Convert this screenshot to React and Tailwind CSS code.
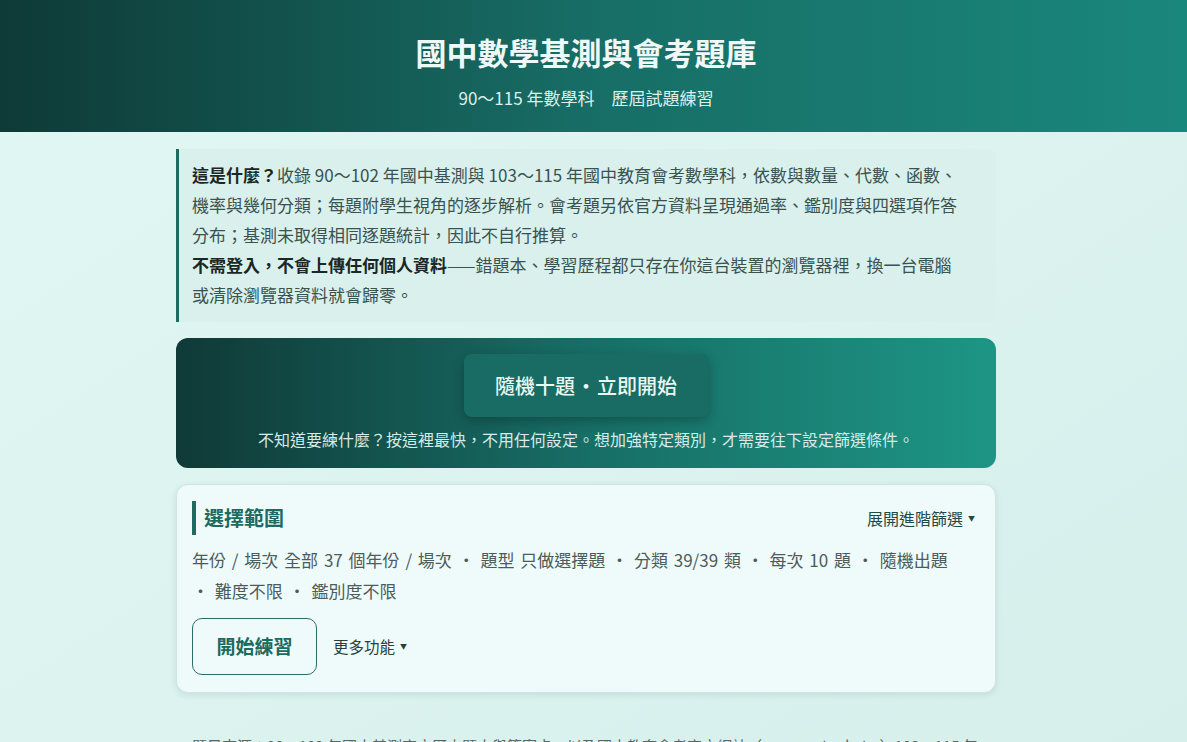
import React from "react";

const font = { fontFamily: '"Noto Sans CJK TC", "Noto Sans", sans-serif' };

export default function App() {
  return (
    <div style={font} className="min-h-[742px] bg-gradient-to-br from-[#e2f7f4] to-[#d6efeb] text-[#2f4744]">
      <header className="h-[132px] pr-[15px] bg-gradient-to-r from-[#0e3a37] via-[#176e66] to-[#1a877c] flex flex-col items-center">
        <h1 className="mt-[31px] text-[31px] leading-[42px] font-bold text-[#eef9f7]">國中數學基測與會考題庫</h1>
        <p className="mt-[12px] text-[17px] leading-[26px] text-[#dcefeb]">90～115 年數學科　歷屆試題練習</p>
      </header>

      <div className="pr-[15px]">
        <main className="w-[820px] mx-auto pt-[17px] flex flex-col">
          <section className="bg-[#d9f0ec] border-l-[3px] border-[#1f6b62] rounded-r-[8px] pl-[13px] pr-[14px] pt-[11px] pb-[12px] text-[17px] leading-[30px] text-[#3a5250]">
            <p>
              <b className="text-[#1a2726]">這是什麼？</b>收錄 90～102 年國中基測與 103～115 年國中教育會考數學科，依數與數量、代數、函數、<br />機率與幾何分類；每題附學生視角的逐步解析。會考題另依官方資料呈現通過率、鑑別度與四選項作答<br />分布；基測未取得相同逐題統計，因此不自行推算。
            </p>
            <p>
              <b className="text-[#1a2726]">不需登入，不會上傳任何個人資料</b>——錯題本、學習歷程都只存在你這台裝置的瀏覽器裡，換一台電腦<br />或清除瀏覽器資料就會歸零。
            </p>
          </section>

          <section className="mt-[16px] h-[130px] rounded-[12px] bg-gradient-to-r from-[#0f3a37] via-[#176e66] to-[#1d9585] flex flex-col items-center pt-[16px]">
            <button className="w-[245px] h-[63px] rounded-[8px] bg-[#196c63] shadow-[0_4px_12px_rgba(0,0,0,0.25)] text-[20px] text-[#eaf7f4] font-medium">
              隨機十題<span className="mx-[1px]">·</span>立即開始
            </button>
            <p className="mt-[11px] text-[16px] leading-[22px] text-[#d6ebe7]">
              不知道要練什麼？按這裡最快，不用任何設定。想加強特定類別，才需要往下設定篩選條件。
            </p>
          </section>

          <section className="mt-[16px] rounded-[12px] bg-[#effbfa] border border-[#cde6e2] shadow-[0_2px_6px_rgba(30,80,75,0.12)] px-[15px] pt-[16px] pb-[17px]">
            <div className="flex items-center justify-between">
              <h2 className="border-l-[4px] border-[#1f6b62] pl-[8px] text-[20px] leading-[34px] font-bold text-[#1c6a60]">選擇範圍</h2>
              <button className="mr-[5px] text-[16px] text-[#1f4a45] flex items-center gap-[5px]">
                展開進階篩選 <span className="text-[7px]">▼</span>
              </button>
            </div>
            <p className="mt-[9px] text-[17px] leading-[31px] text-[#4b5c5a] [word-spacing:2px]">
              年份 / 場次 全部 37 個年份 / 場次 ・ 題型 只做選擇題 ・ 分類 39/39 類 ・ 每次 10 題 ・ 隨機出題<br />・ 難度不限 ・ 鑑別度不限
            </p>
            <div className="mt-[12px] flex items-center gap-[16px]">
              <button className="w-[125px] h-[57px] rounded-[10px] border border-[#2a6f66] text-[19px] font-bold text-[#1c6a60]">開始練習</button>
              <button className="text-[15.5px] text-[#2a3f3c] flex items-center gap-[5px]">
                更多功能 <span className="text-[7px]">▼</span>
              </button>
            </div>
          </section>

          <p className="mt-[40px] px-[16px] text-[15px] leading-[26px] text-[#5a6664]">
            題目來源：90～102 年國中基測官方歷史題本與答案卡，以及國中教育會考官方網站（cap.rcpet.edu.tw）103～115 年會考試題、參考答案與試題分析資料。
          </p>
        </main>
      </div>
    </div>
  );
}
